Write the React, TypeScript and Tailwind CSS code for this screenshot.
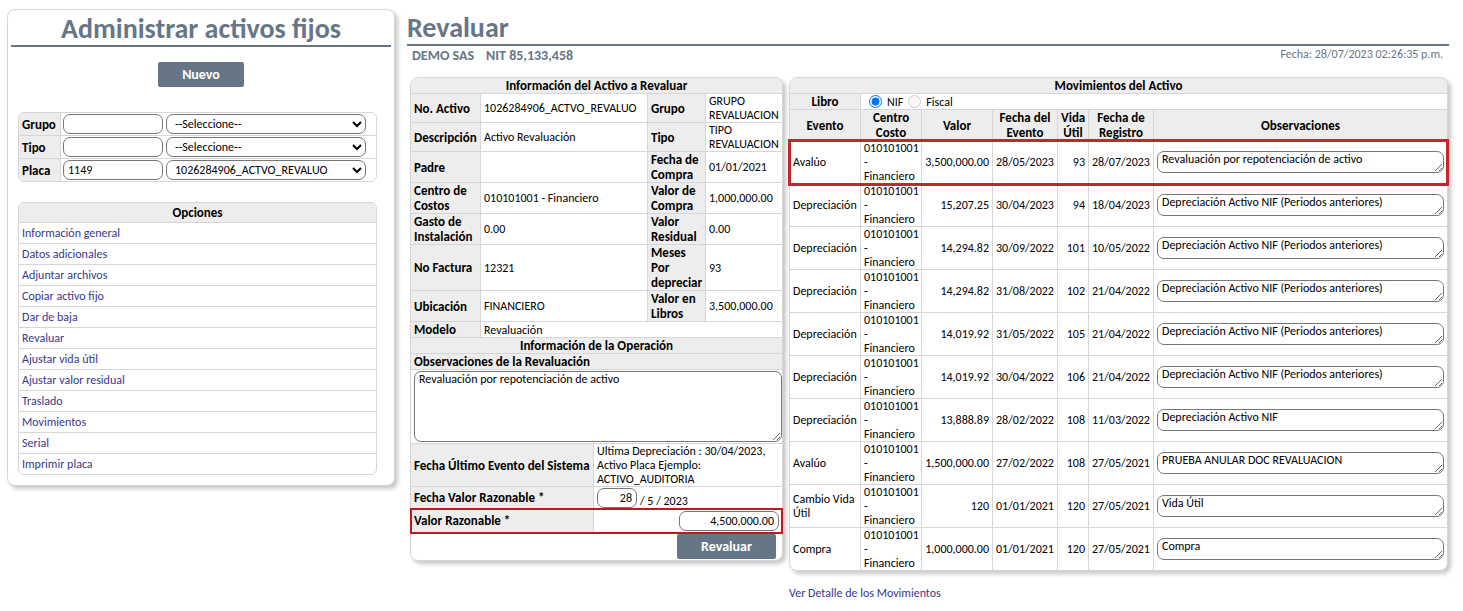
import type { ReactNode } from "react";

const options = [
  "Información general",
  "Datos adicionales",
  "Adjuntar archivos",
  "Copiar activo fijo",
  "Dar de baja",
  "Revaluar",
  "Ajustar vida útil",
  "Ajustar valor residual",
  "Traslado",
  "Movimientos",
  "Serial",
  "Imprimir placa",
];

const filters = [
  { label: "Grupo", code: "", choice: "--Seleccione--" },
  { label: "Tipo", code: "", choice: "--Seleccione--" },
  { label: "Placa", code: "1149", choice: "1026284906_ACTVO_REVALUO" },
];

const asset = [
  ["No. Activo", "1026284906_ACTVO_REVALUO", "Grupo", "GRUPO REVALUACION"],
  ["Descripción", "Activo Revaluación", "Tipo", "TIPO REVALUACION"],
  ["Padre", "", "Fecha de Compra", "01/01/2021"],
  ["Centro de Costos", "010101001 - Financiero", "Valor de Compra", "1,000,000.00"],
  ["Gasto de Instalación", "0.00", "Valor Residual", "0.00"],
  ["No Factura", "12321", "Meses Por depreciar", "93"],
  ["Ubicación", "FINANCIERO", "Valor en Libros", "3,500,000.00"],
];

const movements = [
  ["Avalúo", "3,500,000.00", "28/05/2023", "93", "28/07/2023", "Revaluación por repotenciación de activo"],
  ["Depreciación", "15,207.25", "30/04/2023", "94", "18/04/2023", "Depreciación Activo NIF (Periodos anteriores)"],
  ["Depreciación", "14,294.82", "30/09/2022", "101", "10/05/2022", "Depreciación Activo NIF (Periodos anteriores)"],
  ["Depreciación", "14,294.82", "31/08/2022", "102", "21/04/2022", "Depreciación Activo NIF (Periodos anteriores)"],
  ["Depreciación", "14,019.92", "31/05/2022", "105", "21/04/2022", "Depreciación Activo NIF (Periodos anteriores)"],
  ["Depreciación", "14,019.92", "30/04/2022", "106", "21/04/2022", "Depreciación Activo NIF (Periodos anteriores)"],
  ["Depreciación", "13,888.89", "28/02/2022", "108", "11/03/2022", "Depreciación Activo NIF"],
  ["Avalúo", "1,500,000.00", "27/02/2022", "108", "27/05/2021", "PRUEBA ANULAR DOC REVALUACION"],
  ["Cambio Vida Útil", "120", "01/01/2021", "120", "27/05/2021", "Vida Útil"],
  ["Compra", "1,000,000.00", "01/01/2021", "120", "27/05/2021", "Compra"],
];

const line = "border-[#d6d6d6]";
const cell = `border-b border-r last:border-r-0 px-[3px] py-0 ${line}`;
const head = `${cell} bg-[#ededed] text-[13px] leading-[15px] font-bold`;
const side = `${head} text-left`;
const field = "rounded-[7px] border border-[#767676] bg-white";
const panel = `rounded-lg border bg-white shadow-[3px_3px_4px_rgba(0,0,0,0.22)] ${line}`;
const action = "h-[25px] rounded-xs bg-[#667687] text-sm font-bold text-white";

function Pair({ label, children }: { label: ReactNode; children: ReactNode }) {
  return (
    <>
      <th scope="row" className={side}>{label}</th>
      <td className={cell}>{children}</td>
    </>
  );
}

function Sidebar() {
  return (
    <aside className={`${panel} px-[3px] pb-[10px]`}>
      <h1 className="h-[37px] border-b-2 border-[#667687] text-center text-[28px] leading-[38px] font-bold text-[#667687]">
        Administrar activos fijos
      </h1>
      <div className="mt-[15px] flex justify-center">
        <button type="button" className={`${action} w-[86px]`}>Nuevo</button>
      </div>
      <div className={`mt-[25px] ml-[7px] mr-[14px] overflow-hidden rounded-md border ${line}`}>
        <table className="w-full table-fixed border-separate border-spacing-0">
          <colgroup>
            <col className="w-[42px]" />
            <col />
          </colgroup>
          <tbody className="[&>tr:last-child>*]:border-b-0">
            {filters.map((f) => (
              <tr key={f.label} className="h-[23px] last:h-[22px]">
                <th scope="row" className={side}>
                  <label htmlFor={f.label}>{f.label}</label>
                </th>
                <td className={`${cell} pl-[2px]`}>
                  <div className="flex gap-[3px]">
                    <input id={f.label} defaultValue={f.code} className={`${field} h-5 w-[100px] px-1`} />
                    <select aria-label={f.label} defaultValue={f.choice} className={`${field} h-5 w-[200px] px-1`}>
                      <option>{f.choice}</option>
                    </select>
                  </div>
                </td>
              </tr>
            ))}
          </tbody>
        </table>
      </div>
      <nav className={`mt-5 ml-[7px] mr-[14px] overflow-hidden rounded-md border ${line}`}>
        <h2 className="h-[19px] bg-[#ededed] text-center text-[13px] leading-5 font-bold">Opciones</h2>
        <ul>
          {options.map((o) => (
            <li key={o} className={`h-[21px] border-t px-[3px] leading-5 ${line}`}>
              <a href="#" className="text-[#38388c]">{o}</a>
            </li>
          ))}
        </ul>
      </nav>
    </aside>
  );
}

function AssetPanel() {
  return (
    <form className={`${panel} w-[373px] shrink-0`}>
      <table className="w-full table-fixed border-separate border-spacing-0">
        <colgroup>
          <col className="w-[70px]" />
          <col />
          <col className="w-[58px]" />
          <col className="w-[76px]" />
        </colgroup>
        <tbody>
          <tr>
            <th colSpan={4} className={`${head} rounded-t-[7px]`}>Información del Activo a Revaluar</th>
          </tr>
          {asset.map(([a, b, c, d]) => (
            <tr key={a}>
              <Pair label={a}>{b}</Pair>
              <Pair label={c}>{d}</Pair>
            </tr>
          ))}
          <tr>
            <th scope="row" className={side}>Modelo</th>
            <td colSpan={3} className={cell}>Revaluación</td>
          </tr>
          <tr>
            <th colSpan={4} className={head}>Información de la Operación</th>
          </tr>
          <tr>
            <th colSpan={4} className={side}>
              <label htmlFor="obs">Observaciones de la Revaluación</label>
            </th>
          </tr>
          <tr>
            <td colSpan={4} className={`border-b pt-px pr-0 pb-px pl-[3px] ${line}`}>
              <textarea
                id="obs"
                defaultValue="Revaluación por repotenciación de activo"
                className={`${field} block h-[71px] w-full px-1`}
              />
            </td>
          </tr>
        </tbody>
      </table>
      <table className="w-full table-fixed border-separate border-spacing-0">
        <colgroup>
          <col className="w-[183px]" />
          <col />
        </colgroup>
        <tbody>
          <tr>
            <Pair label="Fecha Último Evento del Sistema">
              Ultima Depreciación : 30/04/2023,
              <br />
              Activo Placa Ejemplo:
              <br />
              ACTIVO_AUDITORIA
            </Pair>
          </tr>
          <tr className="h-[22px]">
            <Pair label={<label htmlFor="dia">Fecha Valor Razonable *</label>}>
              <div className="flex items-end gap-[3px]">
                <input id="dia" defaultValue="28" className={`${field} h-5 w-10 px-1 text-right`} />
                <span>/ 5 / 2023</span>
              </div>
            </Pair>
          </tr>
          <tr className="h-6 outline-2 -outline-offset-1 outline-[#c4161c]">
            <Pair label={<label htmlFor="valor">Valor Razonable *</label>}>
              <div className="flex justify-end">
                <input id="valor" defaultValue="4,500,000.00" className={`${field} h-5 w-[100px] px-1 text-right`} />
              </div>
            </Pair>
          </tr>
          <tr>
            <td colSpan={2} className="p-0">
              <div className="flex justify-end pt-px pr-[6px] pb-px">
                <button type="button" className={`${action} w-[99px]`}>Revaluar</button>
              </div>
            </td>
          </tr>
        </tbody>
      </table>
    </form>
  );
}

function MovementsPanel() {
  return (
    <div className="min-w-0 flex-1">
      <div className={panel}>
        <table className="w-full table-fixed border-separate border-spacing-0">
          <colgroup>
            <col className="w-[71px]" />
            <col className="w-[61px]" />
            <col className="w-[71px]" />
            <col className="w-[65px]" />
            <col className="w-[31px]" />
            <col className="w-[65px]" />
            <col />
          </colgroup>
          <thead>
            <tr>
              <th colSpan={7} className={`${head} rounded-t-[7px]`}>Movimientos del Activo</th>
            </tr>
            <tr>
              <th className={head}>Libro</th>
              <td colSpan={6} className={cell}>
                <div className="flex h-[15px] items-center pl-[5px]">
                  <input id="nif" type="radio" name="libro" defaultChecked className="size-[13px]" />
                  <label htmlFor="nif" className="px-[5px]">NIF</label>
                  <input id="fiscal" type="radio" name="libro" disabled className="size-[13px]" />
                  <label htmlFor="fiscal" className="px-[5px]">Fiscal</label>
                </div>
              </td>
            </tr>
            <tr>
              {["Evento", "Centro Costo", "Valor", "Fecha del Evento", "Vida Útil", "Fecha de Registro", "Observaciones"].map((h) => (
                <th key={h} scope="col" className={head}>{h}</th>
              ))}
            </tr>
          </thead>
          <tbody className="[&>tr:last-child>*]:border-b-0">
            {movements.map(([event, value, date, life, logged, note], i) => (
              <tr key={i} className={i === 0 ? "outline-3 -outline-offset-1 outline-[#c4262e]" : ""}>
                <td className={cell}>{event}</td>
                <td className={cell}>
                  010101001
                  <br />
                  -
                  <br />
                  Financiero
                </td>
                <td className={`${cell} text-right`}>{value}</td>
                <td className={cell}>{date}</td>
                <td className={`${cell} text-right`}>{life}</td>
                <td className={cell}>{logged}</td>
                <td className={cell}>
                  <textarea
                    rows={1}
                    aria-label={`Observaciones ${event} ${date}`}
                    defaultValue={note}
                    className={`${field} block h-[22px] w-full px-1`}
                  />
                </td>
              </tr>
            ))}
          </tbody>
        </table>
      </div>
      <a href="#" className="mt-[15px] inline-block text-[#38388c]">Ver Detalle de los Movimientos</a>
    </div>
  );
}

export default function App() {
  return (
    <div className="grid grid-cols-[388px_minmax(0,1fr)] items-start gap-3 bg-white pt-[9px] pr-[14px] pl-[7px] font-[Carlito,Lato,sans-serif] text-[12px] leading-[14px] text-black">
      <Sidebar />
      <main>
        <h1 className="h-[37px] border-b-2 border-[#667687] text-[28px] leading-[38px] font-bold text-[#667687]">Revaluar</h1>
        <div className="flex h-[31px] justify-between pt-px pr-[6px] pl-[5px] text-[#667687]">
          <div className="flex gap-3 text-sm leading-[18px] font-bold">
            <span>DEMO SAS</span>
            <span>NIT 85,133,458</span>
          </div>
          <span>Fecha: 28/07/2023 02:26:35 p.m.</span>
        </div>
        <div className="flex items-start gap-[6px] pr-px pl-[3px]">
          <AssetPanel />
          <MovementsPanel />
        </div>
      </main>
    </div>
  );
}
